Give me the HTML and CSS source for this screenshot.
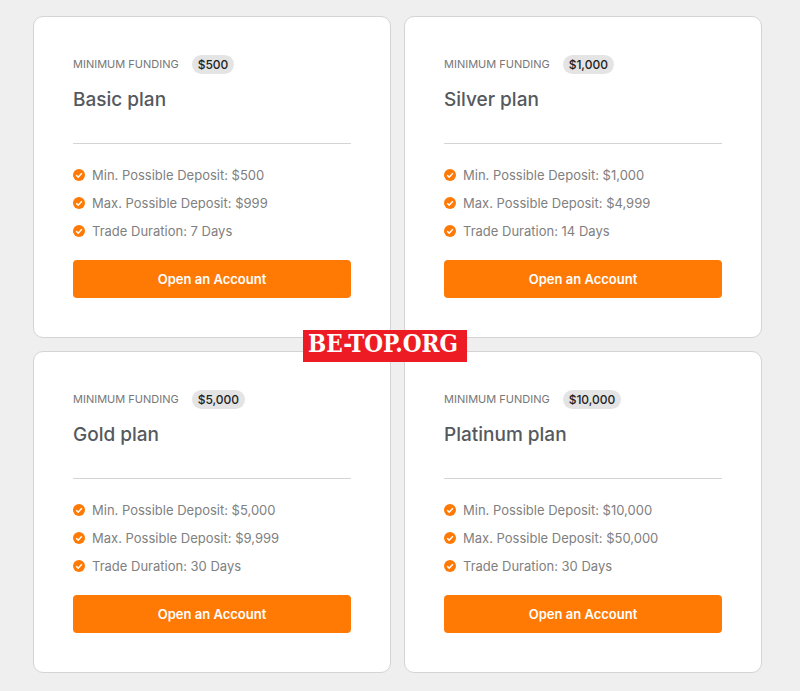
FILE: index.html
```
<!DOCTYPE html>
<html lang="en">
<head>
    <meta charset="UTF-8">
    <meta name="viewport" content="width=device-width, initial-scale=1.0">
    <title>Investment plans</title>
    <link rel="stylesheet" href="styles.css">
</head>
<body>

    <!-- Check icon shared by all the lists -->
    <svg class="sprite" aria-hidden="true">
        <symbol id="check" viewBox="0 0 24 24">
            <circle cx="12" cy="12" r="12" fill="#ff7a05"/>
            <path d="M6.5 12.5l3.8 3.8 7.4-7.6" fill="none" stroke="#fff" stroke-width="3"/>
        </symbol>
    </svg>

    <main class="plans">
        <section class="card">
            <div class="funding">
                <span class="label">MINIMUM FUNDING</span>
                <span class="badge">$500</span>
            </div>
            <h2>Basic plan</h2>
            <hr>
            <ul>
                <li><svg class="icon"><use href="#check"/></svg>Min. Possible Deposit: $500</li>
                <li><svg class="icon"><use href="#check"/></svg>Max. Possible Deposit: $999</li>
                <li><svg class="icon"><use href="#check"/></svg>Trade Duration: 7 Days</li>
            </ul>
            <button type="button">Open an Account</button>
        </section>

        <section class="card">
            <div class="funding">
                <span class="label">MINIMUM FUNDING</span>
                <span class="badge">$1,000</span>
            </div>
            <h2>Silver plan</h2>
            <hr>
            <ul>
                <li><svg class="icon"><use href="#check"/></svg>Min. Possible Deposit: $1,000</li>
                <li><svg class="icon"><use href="#check"/></svg>Max. Possible Deposit: $4,999</li>
                <li><svg class="icon"><use href="#check"/></svg>Trade Duration: 14 Days</li>
            </ul>
            <button type="button">Open an Account</button>
        </section>

        <section class="card">
            <div class="funding">
                <span class="label">MINIMUM FUNDING</span>
                <span class="badge">$5,000</span>
            </div>
            <h2>Gold plan</h2>
            <hr>
            <ul>
                <li><svg class="icon"><use href="#check"/></svg>Min. Possible Deposit: $5,000</li>
                <li><svg class="icon"><use href="#check"/></svg>Max. Possible Deposit: $9,999</li>
                <li><svg class="icon"><use href="#check"/></svg>Trade Duration: 30 Days</li>
            </ul>
            <button type="button">Open an Account</button>
        </section>

        <section class="card">
            <div class="funding">
                <span class="label">MINIMUM FUNDING</span>
                <span class="badge">$10,000</span>
            </div>
            <h2>Platinum plan</h2>
            <hr>
            <ul>
                <li><svg class="icon"><use href="#check"/></svg>Min. Possible Deposit: $10,000</li>
                <li><svg class="icon"><use href="#check"/></svg>Max. Possible Deposit: $50,000</li>
                <li><svg class="icon"><use href="#check"/></svg>Trade Duration: 30 Days</li>
            </ul>
            <button type="button">Open an Account</button>
        </section>
    </main>

    <div class="watermark">BE-TOP.ORG</div>

</body>
</html>
```

FILE: styles.css
```
* {
    box-sizing: border-box;
}
body {
    position: relative;
    margin: 0;
    padding: 16px 38px 18px 33px;
    background-color: #efefef;
    font-family: Inter, "Liberation Sans", sans-serif;
}
.sprite {
    display: none;
}
.plans {
    display: grid;
    grid-template-columns: 1fr 1fr;
    gap: 13px;
}
.card {
    padding: 38px 39px 39px;
    background-color: #fff;
    border: 1px solid #d4d4d4;
    border-radius: 10px;
}
.funding {
    display: flex;
    align-items: center;
    gap: 13px;
    line-height: 19px;
}
.label {
    font-size: 11px;
    color: #777;
}
.badge {
    padding: 0 6px;
    font-size: 12px;
    font-weight: 500;
    color: #222;
    background-color: #e4e4e4;
    border-radius: 10px;
}
h2 {
    margin: 14px 0 31px;
    font-size: 19px;
    font-weight: 500;
    line-height: 24px;
    color: #55595e;
}
hr {
    margin: 0 0 17px;
    border: 0;
    border-top: 1px solid #d4d4d4;
}
ul {
    margin: 0 0 15px;
    padding: 0;
    list-style: none;
}
li {
    display: flex;
    align-items: center;
    gap: 7px;
    font-size: 13px;
    line-height: 28px;
    color: #808080;
}
.icon {
    width: 12px;
    height: 12px;
}
button {
    display: block;
    width: 100%;
    height: 38px;
    border: none;
    border-radius: 4px;
    background-color: #ff7a05;
    color: #fff;
    font-family: inherit;
    font-size: 13px;
    font-weight: 600;
    cursor: pointer;
}
button:hover {
    background-color: #e66c00;
}
.watermark {
    position: absolute;
    top: 330px;
    left: 303px;
    padding: 0 9px 4px 5px;
    background-color: #ed1c24;
    color: #fff;
    font-family: "DejaVu Serif Condensed", "DejaVu Serif", serif;
    font-size: 24px;
    font-weight: bold;
    line-height: 28px;
}
```
